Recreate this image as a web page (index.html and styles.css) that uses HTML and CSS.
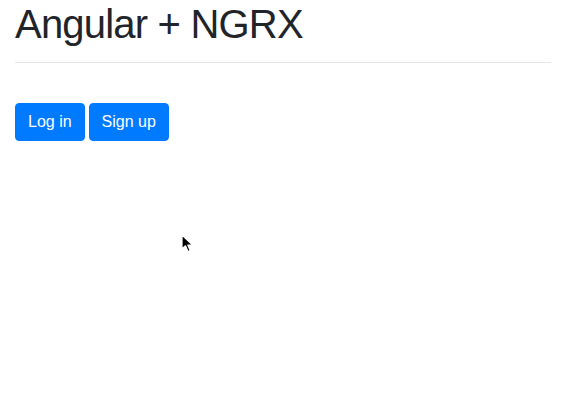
FILE: index.html
```html
<!DOCTYPE html>
<html>
<head>
<meta charset="utf-8">
<link rel="stylesheet" href="styles.css">
</head>
<body>
<div class="container">
  <h1 class="title">Angular + NGRX</h1>
  <hr class="divider">
  <div class="actions">
    <button class="btn">Log in</button>
    <button class="btn">Sign up</button>
  </div>
</div>
<svg class="cursor" width="14" height="20" viewBox="0 0 14 20">
  <path d="M1 1 L1 15 L4.5 11.8 L7 17.5 L9.2 16.5 L6.8 11 L11.5 11 Z" fill="#000" stroke="#fff" stroke-width="1.2" stroke-linejoin="round"/>
</svg>
</body>
</html>
```
FILE: styles.css
```css
html, body {
  margin: 0;
  padding: 0;
  background: #fff;
}
body {
  font-family: "Liberation Sans", Arial, Helvetica, sans-serif;
  color: #212529;
}
.container {
  padding: 0 15px;
}
.title {
  margin: 0 0 14px 0;
  font-size: 40px;
  font-weight: 500;
  line-height: 1.2;
  letter-spacing: -0.8px;
}
.divider {
  margin: 0 0 40px 0;
  border: 0;
  border-top: 1px solid rgba(0,0,0,0.1);
}
.actions {
  display: flex;
  gap: 4px;
}
.btn {
  font-family: inherit;
  font-size: 16px;
  line-height: 1.5;
  padding: 6px 12px;
  color: #fff;
  background: #007bff;
  border: 1px solid #007bff;
  border-radius: 4px;
}
.cursor {
  position: absolute;
  left: 181px;
  top: 234px;
}
```
